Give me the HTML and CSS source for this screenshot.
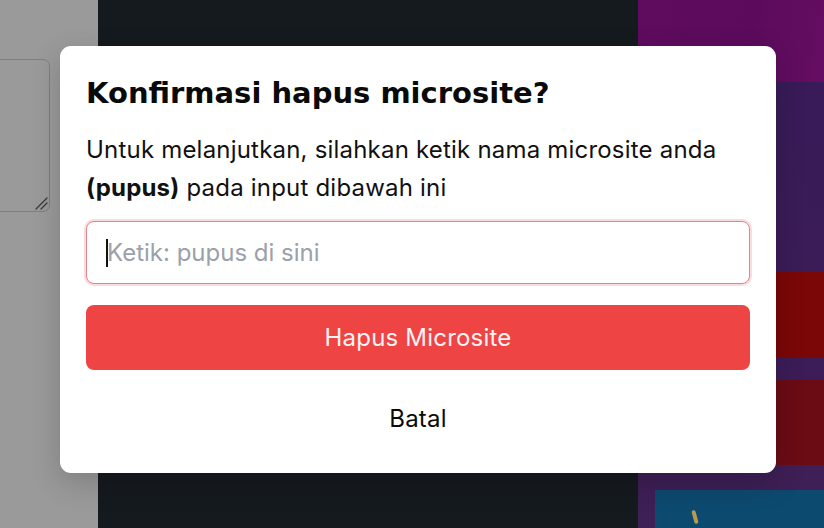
FILE: index.html
```html
<!DOCTYPE html>
<html lang="id">
<head>
<meta charset="utf-8">
<title>Konfirmasi hapus microsite</title>
<link rel="stylesheet" href="styles.css">
</head>
<body>
<div class="page">
  <aside class="side">
    <div class="textbox">
      <svg class="grip" width="14" height="14" viewBox="0 0 14 14"><path d="M2 13 L13 2 M7 13 L13 7" stroke="#3a3a3a" stroke-width="1.3" fill="none" stroke-linecap="round"/></svg>
    </div>
  </aside>
  <main class="center"></main>
  <section class="right">
    <div class="band"></div>
    <div class="panel">
      <div class="block red"></div>
      <div class="block darkred"></div>
    </div>
    <div class="thumb"><span class="spark"></span></div>
  </section>
</div>

<div class="modal" role="dialog" aria-labelledby="mtitle">
  <h2 id="mtitle" class="modal-title">Konfirmasi hapus microsite?</h2>
  <p class="modal-text">Untuk melanjutkan, silahkan ketik nama microsite anda <b>(pupus)</b> pada input dibawah ini</p>
  <label class="field">
    <span class="caret"></span>
    <input class="field-input" type="text" placeholder="Ketik: pupus di sini">
  </label>
  <button class="btn btn-danger" type="button">Hapus Microsite</button>
  <button class="btn btn-plain" type="button">Batal</button>
</div>
</body>
</html>
```

FILE: styles.css
```css
* { box-sizing: border-box; }
html, body { margin: 0; padding: 0; }
body {
  width: 824px;
  height: 528px;
  overflow: hidden;
  font-family: Inter, "Liberation Sans", sans-serif;
  background: #9a9a9a;
  position: relative;
}
.page {
  display: grid;
  grid-template-columns: 98px 540px 1fr;
  height: 528px;
}
.side {
  background: #9a9a9a;
  padding-top: 59px;
}
.textbox {
  position: relative;
  width: 62px;
  height: 153px;
  margin-left: -12px;
  border: 1px solid #7f7f7f;
  border-radius: 7px;
}
.grip {
  position: absolute;
  right: 1px;
  bottom: 1px;
}
.center { background: #151a1f; }
.right {
  background: #3e1f56;
  display: flex;
  flex-direction: column;
}
.band {
  height: 82px;
  background: linear-gradient(100deg, #5f0b5f 0%, #5c0b5c 60%, #650d62 100%);
}
.panel {
  margin-left: 12px;
  height: 383px;
  background: linear-gradient(180deg, #381b58 0%, #3d1d57 100%);
  display: flex;
  flex-direction: column;
  padding-top: 190px;
  gap: 22px;
}
.block { height: 86px; }
.red { background: #7b0707; }
.darkred { background: #6b0b14; height: 85px; }
.thumb {
  margin: 25px 0 0 17px;
  flex: 1;
  background: #0d4a6f;
  position: relative;
}
.spark {
  position: absolute;
  left: 38px;
  top: 20px;
  width: 4px;
  height: 14px;
  background: #b89a52;
  border-radius: 2px;
  transform: rotate(-15deg);
}

.modal {
  position: absolute;
  left: 60px;
  top: 46px;
  width: 716px;
  height: 427px;
  background: #ffffff;
  border-radius: 11px;
  padding: 30px 26px 0 26px;
  box-shadow: 0 10px 30px rgba(0,0,0,0.18);
  display: flex;
  flex-direction: column;
}
.modal-title {
  margin: 0;
  font-family: "DejaVu Sans", Inter, sans-serif;
  font-size: 29px;
  line-height: 35px;
  font-weight: 700;
  color: #0a0a0a;
}
.modal-text {
  margin: 20px 0 0 0;
  font-size: 24px;
  line-height: 38px;
  letter-spacing: 0.2px;
  color: #111111;
}
.modal-text b { font-weight: 700; }
.field {
  position: relative;
  display: block;
  margin-top: 14px;
}
.field-input {
  display: block;
  width: 100%;
  height: 63px;
  border: 1px solid #d98890;
  border-radius: 8px;
  box-shadow: 0 0 0 2px #fcdadd;
  padding: 0 20px;
  font-family: Inter, "Liberation Sans", sans-serif;
  font-size: 24px;
  color: #111;
  background: #fff;
  outline: none;
}
.field-input::placeholder { color: #9aa1ab; }
.caret {
  position: absolute;
  left: 20px;
  top: 18px;
  width: 2px;
  height: 28px;
  background: #111;
  z-index: 1;
}
.btn {
  display: block;
  width: 100%;
  border: 0;
  font-family: Inter, "Liberation Sans", sans-serif;
  font-size: 24px;
  letter-spacing: 0.2px;
  cursor: pointer;
}
.btn-danger {
  margin-top: 21px;
  height: 65px;
  border-radius: 8px;
  background: #ef4444;
  color: #fff3f3;
}
.btn-plain {
  margin-top: 16px;
  height: 65px;
  background: transparent;
  color: #0a0a0a;
}
```
